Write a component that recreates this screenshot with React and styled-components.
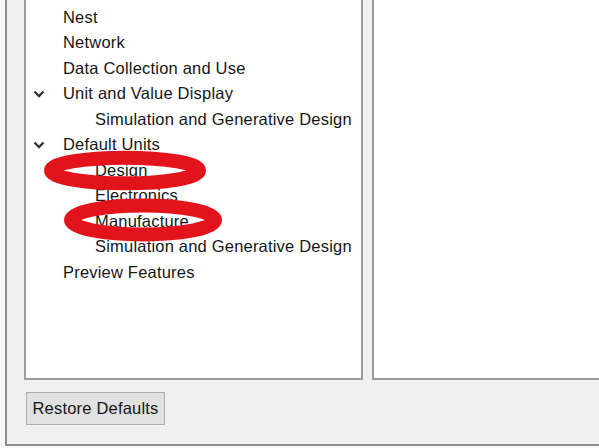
import React from "react";
import styled, { createGlobalStyle } from "styled-components";

const GlobalStyle = createGlobalStyle`
  html, body {
    margin: 0;
    padding: 0;
    background: #f7f7f7;
    overflow: hidden;
  }
  body {
    font-family: "Liberation Sans", Arial, sans-serif;
  }
`;

const Screen = styled.div`
  position: relative;
  width: 599px;
  height: 448px;
  overflow: hidden;
`;

const Dialog = styled.div`
  display: flex;
  flex-direction: column;
  margin-left: 5px;
  width: 620px;
  height: 446px;
  box-sizing: border-box;
  background: #f0f0f0;
  border-left: 2px solid #8e8e8e;
  border-bottom: 2px solid #8e8e8e;
  padding: 0 0 19px 17px;
`;

const Panels = styled.div`
  display: flex;
  gap: 9px;
  height: 381px;
`;

const Panel = styled.div`
  box-sizing: border-box;
  width: ${(p) => (p.$width ? `${p.$width}px` : "auto")};
  flex: ${(p) => (p.$width ? "none" : "1")};
  height: 100%;
  background: #ffffff;
  border: 2px solid #9c9c9c;
  border-top: none;
  overflow: hidden;
`;

const Tree = styled.ul`
  list-style: none;
  margin: 4.5px 0 0 0;
  padding: 0;
`;

const Row = styled.li`
  display: flex;
  align-items: center;
  height: 25.5px;
  padding-left: ${(p) => 37 + p.$level * 32}px;
  position: relative;
  font-size: 16.5px;
  letter-spacing: 0.2px;
  color: #161616;
  white-space: nowrap;
`;

const Toggle = styled.svg`
  position: absolute;
  left: 7px;
  top: 9px;
`;

const Footer = styled.div`
  display: flex;
  margin-top: 12px;
`;

const Button = styled.button`
  margin-left: 2px;
  width: 139px;
  height: 33px;
  box-sizing: border-box;
  background: #e1e1e1;
  border: 1px solid #adadad;
  font-family: "Liberation Sans", Arial, sans-serif;
  font-size: 16.5px;
  letter-spacing: 0.2px;
  color: #161616;
  padding: 0;
`;

const Marks = styled.svg`
  position: absolute;
  left: 0;
  top: 0;
  pointer-events: none;
`;

const items = [
  { label: "Nest", level: 0 },
  { label: "Network", level: 0 },
  { label: "Data Collection and Use", level: 0 },
  { label: "Unit and Value Display", level: 0, open: true },
  { label: "Simulation and Generative Design", level: 1 },
  { label: "Default Units", level: 0, open: true },
  { label: "Design", level: 1 },
  { label: "Electronics", level: 1 },
  { label: "Manufacture", level: 1 },
  { label: "Simulation and Generative Design", level: 1 },
  { label: "Preview Features", level: 0 },
];

const Chevron = () => (
  <Toggle width="12" height="8" viewBox="0 0 12 8">
    <polyline
      points="1.5,1.5 6,6 10.5,1.5"
      fill="none"
      stroke="#333333"
      strokeWidth="2.3"
    />
  </Toggle>
);

export default function App() {
  return (
    <Screen>
      <GlobalStyle />
      <Dialog>
        <Panels>
          <Panel $width={339}>
            <Tree>
              {items.map((item, i) => (
                <Row key={i} $level={item.level}>
                  {item.open && <Chevron />}
                  {item.label}
                </Row>
              ))}
            </Tree>
          </Panel>
          <Panel />
        </Panels>
        <Footer>
          <Button>Restore Defaults</Button>
        </Footer>
      </Dialog>
      <Marks width="599" height="448" viewBox="0 0 599 448">
        <ellipse cx="125" cy="170.5" rx="74" ry="12.8" fill="none" stroke="#e3131c" strokeWidth="14" />
        <ellipse cx="143" cy="220" rx="72" ry="14.5" fill="none" stroke="#e3131c" strokeWidth="14" />
      </Marks>
    </Screen>
  );
}
